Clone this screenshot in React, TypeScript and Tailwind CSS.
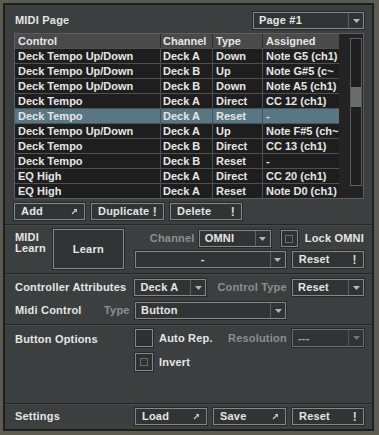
import React from "react";

const rows = [
  ["Deck Tempo Up/Down", "Deck A", "Down", "Note G5 (ch1)"],
  ["Deck Tempo Up/Down", "Deck B", "Up", "Note G#5 (c~"],
  ["Deck Tempo Up/Down", "Deck B", "Down", "Note A5 (ch1)"],
  ["Deck Tempo", "Deck A", "Direct", "CC 12 (ch1)"],
  ["Deck Tempo", "Deck A", "Reset", "-"],
  ["Deck Tempo Up/Down", "Deck A", "Up", "Note F#5 (ch~"],
  ["Deck Tempo", "Deck B", "Direct", "CC 13 (ch1)"],
  ["Deck Tempo", "Deck B", "Reset", "-"],
  ["EQ High", "Deck A", "Direct", "CC 20 (ch1)"],
  ["EQ High", "Deck A", "Reset", "Note D0 (ch1)"],
];

const Arrow = () => (
  <svg width="7" height="7" viewBox="0 0 7 7" className="shrink-0">
    <path d="M1 6 L5.5 1.5" stroke="#c8c8c8" strokeWidth="1.2" />
    <path d="M2.5 1 H6 V4.5 Z" fill="#c8c8c8" />
  </svg>
);

const Bang = () => <span className="text-[#d8d8d8] text-[12px] leading-none">!</span>;

const Btn = ({ label, icon, className }: { label: string; icon?: "arrow" | "bang"; className: string }) => (
  <div className={`h-[17px] flex items-center justify-between pl-[6px] pr-[6px] border border-[#85898a] bg-[#303435] shadow-[0_0_0_1px_#26292a] ${className}`}>
    <span>{label}</span>
    {icon === "arrow" && <Arrow />}
    {icon === "bang" && <Bang />}
  </div>
);

const Select = ({ label, className, dim, center }: { label: string; className: string; dim?: boolean; center?: boolean }) => (
  <div className={`flex shrink-0 border ${dim ? "border-[#6c7071]" : "border-[#85898a]"} bg-[#303435] shadow-[0_0_0_1px_#26292a] ${className}`}>
    <span className={`flex-1 flex items-center ${center ? "justify-center" : "pl-[5px]"} ${dim ? "text-[#a8a8a8]" : ""}`}>{label}</span>
    <span className={`w-[15px] flex items-center justify-center border-l ${dim ? "border-[#4d5152]" : "border-[#5d6162]"}`}>
      <svg width="7" height="4" viewBox="0 0 7 4">
        <path d="M0 0 H7 L3.5 4 Z" fill={dim ? "#707474" : "#b8b8b8"} />
      </svg>
    </span>
  </div>
);

const Check = ({ inner, className }: { inner?: boolean; className?: string }) => (
  <div className={`flex shrink-0 items-center justify-center border border-[#85898a] bg-[#2e3132] shadow-[0_0_0_1px_#26292a] ${className}`}>
    {inner && <div className="w-[8px] h-[8px] border border-[#686c6d]" />}
  </div>
);

const Sep = ({ className = "" }: { className?: string }) => (
  <div className={`h-[2px] border-t border-b border-t-[#232526] border-b-[#454a4b] -ml-[9px] -mr-[8px] ${className}`} />
);

export default function App() {
  return (
    <div className="w-[379px] h-[435px] bg-[#5d5a4f] pl-[3px] pr-[5px] pt-[3px] pb-[4px] font-['Liberation_Sans',sans-serif] font-bold text-[11px] text-[#e6e6e6] tracking-[0.2px] whitespace-nowrap">
      <div className="h-full border-2 border-[#1e2021] bg-[#3b3f40] pl-[9px] pr-[8px] flex flex-col">
        {/* MIDI page header */}
        <div className="flex items-center justify-between mt-[7px] h-[17px]">
          <span className="pl-[1px]">MIDI Page</span>
          <Select label="Page #1" className="w-[111px] h-[17px]" />
        </div>

        {/* table */}
        <div className="mt-[4px] h-[166px] border border-[#5b5f60] bg-[#232323] flex tracking-normal">
          <div className="w-[324px] flex flex-col">
            <div className="h-[14px] flex bg-[#4a4a4a]">
              <div className="w-[146px] pl-[3px] border-r border-[#2d2d2d] flex items-center">Control</div>
              <div className="w-[52px] pl-[2px] border-r border-[#2d2d2d] flex items-center">Channel</div>
              <div className="w-[50px] pl-[3px] border-r border-[#2d2d2d] flex items-center">Type</div>
              <div className="w-[76px] pl-[3px] flex items-center">Assigned</div>
            </div>
            {rows.map((r, i) => (
              <div key={i} className={`h-[15px] flex border-t border-[#4f5152] ${i === 4 ? "bg-[#587783]" : "bg-[#1e1e1e]"}`}>
                <div className="w-[146px] pl-[3px] border-r border-[#4f5152] flex items-center">{r[0]}</div>
                <div className="w-[52px] pl-[2px] border-r border-[#4f5152] flex items-center overflow-hidden">{r[1]}</div>
                <div className="w-[50px] pl-[3px] border-r border-[#4f5152] flex items-center">{r[2]}</div>
                <div className="w-[76px] pl-[3px] flex items-center overflow-hidden">{r[3]}</div>
              </div>
            ))}
          </div>
          <div className="flex-1 flex justify-end pr-[1px] pt-[4px]">
            <div className="w-[12px] h-[148px] border border-[#5a5e5f] bg-[#1f1f1f] pt-[48px]">
              <div className="h-[20px] bg-[#6b6d6d]" />
            </div>
          </div>
        </div>

        {/* buttons */}
        <div className="flex gap-[6px] mt-[4px]">
          <Btn label="Add" icon="arrow" className="w-[71px]" />
          <Btn label="Duplicate" icon="bang" className="w-[73px]" />
          <Btn label="Delete" icon="bang" className="w-[72px]" />
        </div>
        <Sep className="mt-[4px]" />

        {/* MIDI learn */}
        <div className="flex mt-[3px] h-[40px]">
          <div className="w-[39px] leading-[11px] pt-[3px] pl-[1px]">MIDI<br />Learn</div>
          <div className="w-[71px] h-[40px] flex items-center justify-center border border-[#85898a] bg-[#303435] shadow-[0_0_0_1px_#26292a]">Learn</div>
          <div className="flex-1 flex flex-col gap-[4px] pl-[11px] pt-[1px]">
            <div className="flex items-center h-[17px]">
              <span className="text-[#8c9090] w-[64px] shrink-0 pl-[15px]">Channel</span>
              <Select label="OMNI" className="w-[72px] h-[17px]" />
              <Check inner className="w-[17px] h-[17px] ml-[10px]" />
              <span className="ml-[7px]">Lock OMNI</span>
            </div>
            <div className="flex items-center h-[17px]">
              <Select label="-" center className="w-[151px] h-[17px]" />
              <Btn label="Reset" icon="bang" className="w-[72px] ml-[6px]" />
            </div>
          </div>
        </div>
        <Sep className="mt-[4px]" />

        {/* controller attributes */}
        <div className="flex items-center mt-[4px] h-[17px]">
          <span className="w-[121px] pl-[1px]">Controller Attributes</span>
          <Select label="Deck A" className="w-[72px] h-[17px]" />
          <span className="text-[#8c9090] ml-[11px] w-[75px]">Control Type</span>
          <Select label="Reset" className="w-[72px] h-[17px]" />
        </div>
        <div className="flex items-center mt-[6px] h-[17px]">
          <span className="w-[90px] pl-[1px]">Midi Control</span>
          <span className="w-[31px] text-[#8c9090]">Type</span>
          <Select label="Button" className="w-[151px] h-[17px]" />
        </div>
        <Sep className="mt-[5px]" />

        {/* button options */}
        <div className="flex mt-[3px] h-[74px]">
          <span className="w-[121px] pl-[1px] pt-[2px]">Button Options</span>
          <div className="flex flex-col gap-[6px]">
            <div className="flex items-center h-[18px]">
              <Check className="w-[18px] h-[18px]" />
              <span className="ml-[6px] w-[69px]">Auto Rep.</span>
              <span className="text-[#8c9090] w-[64px]">Resolution</span>
              <Select label="---" dim className="w-[72px] h-[18px]" />
            </div>
            <div className="flex items-center h-[18px]">
              <Check inner className="w-[18px] h-[18px]" />
              <span className="ml-[6px]">Invert</span>
            </div>
          </div>
        </div>
        <Sep />

        {/* settings */}
        <div className="flex items-center mt-[3px] h-[17px]">
          <span className="w-[121px] pl-[1px]">Settings</span>
          <Btn label="Load" icon="arrow" className="w-[72px]" />
          <Btn label="Save" icon="arrow" className="w-[73px] ml-[6px]" />
          <Btn label="Reset" icon="bang" className="w-[72px] ml-[6px]" />
        </div>
      </div>
    </div>
  );
}
